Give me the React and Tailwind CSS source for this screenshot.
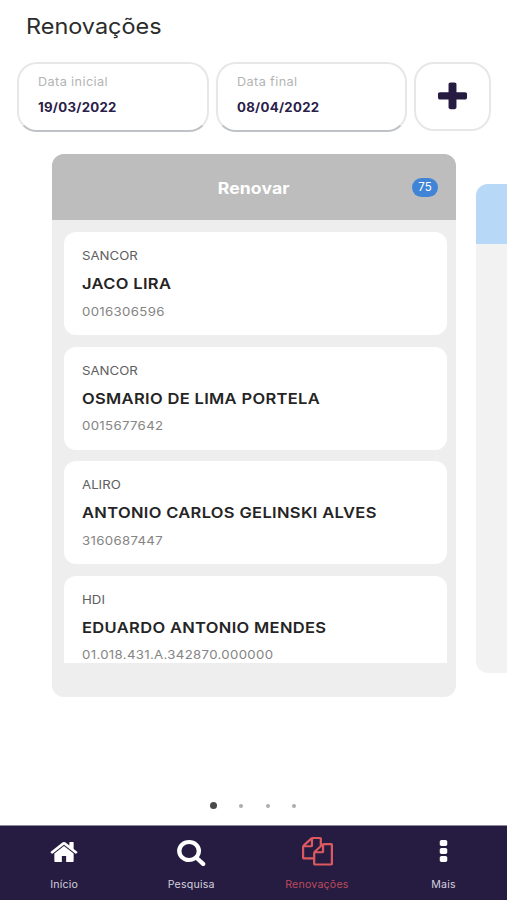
import React, { useState } from 'react';
import clsx from 'clsx';

const icons = {
  home: 'M1472 992v480q0 26-19 45t-45 19h-384v-384h-256v384h-384q-26 0-45-19t-19-45v-480q0-1 .5-3t.5-3l575-474 575 474q1 2 1 6zm223-69l-62 74q-8 9-21 11h-3q-13 0-21-7l-692-577-692 577q-12 8-24 7-13-2-21-11l-62-74q-8-10-7-23.5t11-21.5l719-599q32-26 76-26t76 26l244 204v-195q0-14 9-23t23-9h192q14 0 23 9t9 23v408l219 182q10 8 11 21.5t-7 23.5z',
  search: 'M1216 832q0-185-131.5-316.5t-316.5-131.5-316.5 131.5-131.5 316.5 131.5 316.5 316.5 131.5 316.5-131.5 131.5-316.5zm512 832q0 52-38 90t-90 38q-54 0-90-38l-343-342q-179 124-399 124-143 0-273.5-55.5t-225-150-150-225-55.5-273.5 55.5-273.5 150-225 225-150 273.5-55.5 273.5 55.5 225 150 150 225 55.5 273.5q0 220-124 399l343 343q37 37 37 90z',
  files: 'M1696 384q40 0 68 28t28 68v1216q0 40-28 68t-68 28h-960q-40 0-68-28t-28-68v-288h-544q-40 0-68-28t-28-68v-672q0-40 20-88t48-76l408-408q28-28 76-48t88-20h416q40 0 68 28t28 68v328q68-40 128-40h416zm-544 213l-299 299h299v-299zm-640-384l-299 299h299v-299zm196 647l316-316v-416h-384v416q0 40-28 68t-68 28h-416v640h512v-256q0-40 20-88t48-76zm956 804v-1152h-384v416q0 40-28 68t-68 28h-416v640h896z',
  more: 'M1088 1248v192q0 40-28 68t-68 28h-192q-40 0-68-28t-28-68v-192q0-40 28-68t68-28h192q40 0 68 28t28 68zm0-512v192q0 40-28 68t-68 28h-192q-40 0-68-28t-28-68v-192q0-40 28-68t68-28h192q40 0 68 28t28 68zm0-512v192q0 40-28 68t-68 28h-192q-40 0-68-28t-28-68v-192q0-40 28-68t68-28h192q40 0 68 28t28 68z',
  plus: 'M1600 736v192q0 40-28 68t-68 28h-416v416q0 40-28 68t-68 28h-192q-40 0-68-28t-28-68v-416h-416q-40 0-68-28t-28-68v-192q0-40 28-68t68-28h416v-416q0-40 28-68t68-28h192q40 0 68 28t28 68v416h416q40 0 68 28t28 68z',
};

const renewals = [
  { insurer: 'SANCOR', name: 'JACO LIRA', policy: '0016306596' },
  { insurer: 'SANCOR', name: 'OSMARIO DE LIMA PORTELA', policy: '0015677642' },
  { insurer: 'ALIRO', name: 'ANTONIO CARLOS GELINSKI ALVES', policy: '3160687447' },
  { insurer: 'HDI', name: 'EDUARDO ANTONIO MENDES', policy: '01.018.431.A.342870.000000' },
];

const tabs = [
  { id: 'inicio', label: 'Início', icon: 'home', size: 'h-7 w-[30px]' },
  { id: 'pesquisa', label: 'Pesquisa', icon: 'search', size: 'h-[28px] w-[30.5px]' },
  { id: 'renovacoes', label: 'Renovações', icon: 'files', size: 'h-[28.5px] w-[31px]' },
  { id: 'mais', label: 'Mais', icon: 'more', size: 'h-7 w-[35px]' },
];

function Icon({ name, className }) {
  return (
    <svg viewBox="0 0 1792 1792" preserveAspectRatio="none" fill="currentColor" className={className}>
      <path d={icons[name]} />
    </svg>
  );
}

function DateField({ label, value }) {
  return (
    <button className="flex h-[70px] w-[191.5px] flex-col items-start rounded-[20px] border-2 border-[#e7e7e9] border-b-[#bfc2c6] bg-white pt-[9px] pl-[19px] text-left">
      <span className="origin-left scale-x-[1.06] text-[12px] leading-[18px] tracking-[0.35px] text-[#b4b4b4]">{label}</span>
      <span className="mt-2 origin-left scale-x-[1.06] text-[12.5px] leading-[18px] font-bold tracking-[0.25px] text-[#2a2048]">{value}</span>
    </button>
  );
}

function RenewalCard({ insurer, name, policy }) {
  return (
    <div className="flex h-[103px] shrink-0 flex-col items-start rounded-xl bg-white pt-[15px] pl-[18px] whitespace-nowrap">
      <span className="origin-left scale-x-[1.08] text-[12.25px] leading-[18px] text-[#606060]">{insurer}</span>
      <span className="mt-[9px] origin-left scale-x-[1.1] text-[15px] leading-[20px] font-semibold tracking-[0.3px] text-[#242424]">{name}</span>
      <span className="mt-[8.5px] origin-left scale-x-[1.08] text-[12.25px] leading-[18px] tracking-[0.3px] text-[#858585]">{policy}</span>
    </div>
  );
}

export default function App() {
  const [activeTab, setActiveTab] = useState('renovacoes');

  return (
    <div className="flex h-[900px] w-[507px] flex-col overflow-hidden bg-white font-['Inter',sans-serif]">
      <header className="h-[62px] shrink-0 pt-[10px] pl-[26px]">
        <h1 className="inline-block origin-left scale-x-[1.065] text-[22px] leading-8 text-[#2c2c2c]">Renovações</h1>
      </header>

      <div className="flex shrink-0 gap-[7px] pl-[17px]">
        <DateField label="Data inicial" value="19/03/2022" />
        <DateField label="Data final" value="08/04/2022" />
        <button className="flex h-[69px] w-[77px] items-center justify-center rounded-[20px] border-2 border-[#e7e7e9] bg-white text-[#261c42]">
          <Icon name="plus" className="h-[34px] w-[37px]" />
        </button>
      </div>

      <main className="mt-[22px] flex h-[543px] shrink-0 gap-5 pl-[52px]">
        <section className="flex w-[404px] shrink-0 flex-col overflow-hidden rounded-xl bg-[#eeeeee]">
          <div className="grid h-[66px] shrink-0 grid-cols-[1fr_auto_1fr] items-center bg-[#bdbdbd] px-[18px]">
            <h2 className="col-start-2 scale-x-[1.1] pt-px text-[16px] font-bold tracking-[0.1px] text-white">Renovar</h2>
            <span className="flex h-[19px] w-[26px] items-center justify-center justify-self-end rounded-full bg-[#4084d7] text-[11.5px] leading-[19px] text-white">75</span>
          </div>
          <div className="mt-3 mr-[9px] ml-3 flex h-[431px] flex-col gap-[11.5px] overflow-hidden">
            {renewals.map((item) => (
              <RenewalCard key={item.policy} {...item} />
            ))}
          </div>
        </section>

        <section className="mt-[30px] h-[489px] w-[364px] shrink-0 overflow-hidden rounded-xl bg-[#f2f2f2]">
          <div className="h-[60px] bg-[#b7d8f6]" />
        </section>
      </main>

      <div className="flex flex-1 items-end justify-center pr-px pb-[15.5px]">
        <div className="flex h-2 items-center gap-[22.8px]">
          <span className="-mr-[1px] size-[7.5px] rounded-full bg-[#4a4a4a]" />
          <span className="size-1 rounded-full bg-[#adadad]" />
          <span className="size-1 rounded-full bg-[#adadad]" />
          <span className="size-1 rounded-full bg-[#adadad]" />
        </div>
      </div>

      <nav className="grid h-[75px] shrink-0 grid-cols-4 border-t border-[#8d879c] bg-[#261c41] pl-px">
        {tabs.map((tab) => (
          <button
            key={tab.id}
            onClick={() => setActiveTab(tab.id)}
            className={clsx('flex flex-col items-center', activeTab === tab.id ? 'text-[#dc5960]' : 'text-white')}
          >
            <span className="flex h-[51px] items-center justify-center">
              <Icon name={tab.icon} className={tab.size} />
            </span>
            <span className={clsx('scale-x-[1.06] text-[10px] leading-[14px] tracking-[0.2px]', activeTab === tab.id ? 'text-[#bd4b5b]' : 'text-[#d4d0de]')}>
              {tab.label}
            </span>
          </button>
        ))}
      </nav>
    </div>
  );
}
